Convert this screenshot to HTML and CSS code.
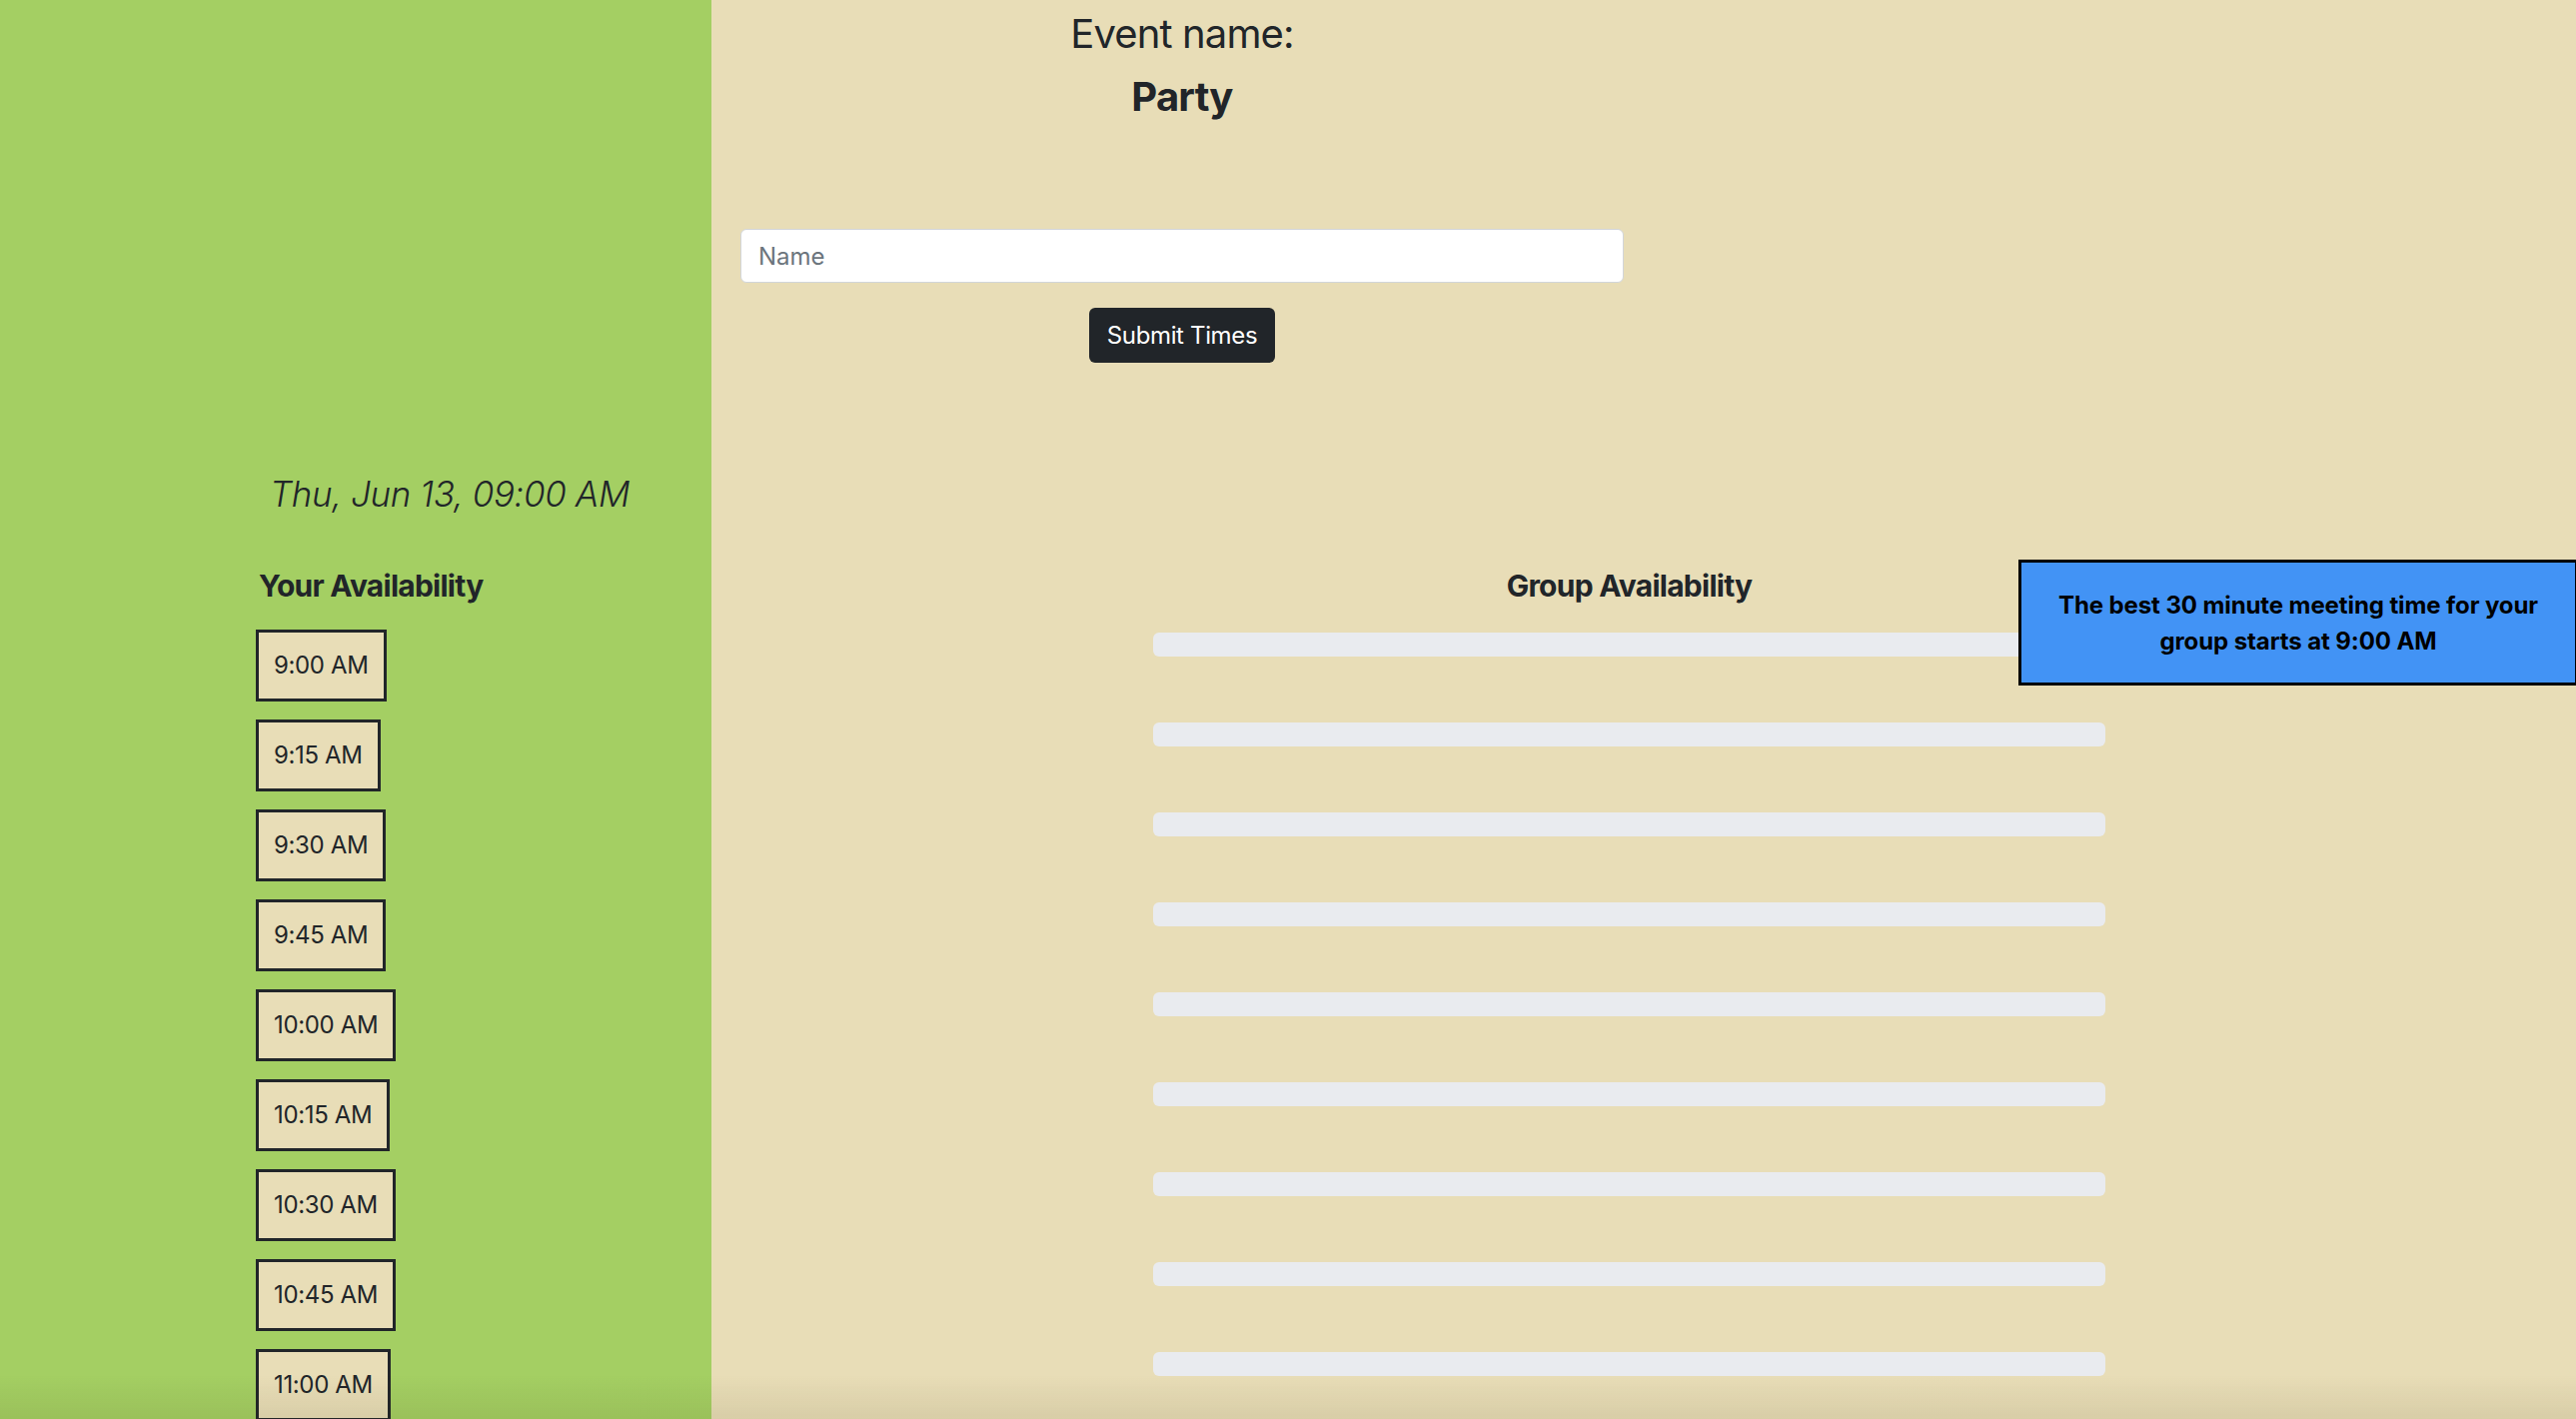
FILE: index.html
```html
<!DOCTYPE html>
<html lang="en">
<head>
<meta charset="utf-8">
<title>Party</title>
<link rel="stylesheet" href="styles.css">
</head>
<body>
<div class="page">
  <section class="top">
    <div class="event-col">
      <h3 class="event-label">Event name:</h3>
      <h3 class="event-name">Party</h3>
      <form class="name-form">
        <input class="name-input" type="text" placeholder="Name">
        <button class="submit-btn" type="button">Submit Times</button>
      </form>
    </div>
  </section>

  <section class="lower">
    <p class="date">Thu, Jun 13, 09:00 AM</p>
    <div class="avail-row">
      <div class="your-col">
        <h5 class="section-title">Your Availability</h5>
        <div class="slots">
          <button class="slot" type="button">9:00 AM</button>
          <button class="slot" type="button">9:15 AM</button>
          <button class="slot" type="button">9:30 AM</button>
          <button class="slot" type="button">9:45 AM</button>
          <button class="slot" type="button">10:00 AM</button>
          <button class="slot" type="button">10:15 AM</button>
          <button class="slot" type="button">10:30 AM</button>
          <button class="slot" type="button">10:45 AM</button>
          <button class="slot" type="button">11:00 AM</button>
        </div>
      </div>
      <div class="group-col">
        <h5 class="section-title group-title">Group Availability</h5>
        <div class="bars">
          <div class="bar"></div>
          <div class="bar"></div>
          <div class="bar"></div>
          <div class="bar"></div>
          <div class="bar"></div>
          <div class="bar"></div>
          <div class="bar"></div>
          <div class="bar"></div>
          <div class="bar"></div>
        </div>
      </div>
      <div class="best-time">The best 30 minute meeting time for your<br>group starts at 9:00 AM</div>
    </div>
  </section>
</div>
<div class="bottom-shade"></div>
</body>
</html>
```

FILE: styles.css
```css
html, body {
  margin: 0;
  padding: 0;
}

body {
  font-family: Inter, "Noto Sans", "Liberation Sans", sans-serif;
  color: #212529;
  font-size: 24px;
  line-height: 1.5;
  overflow: hidden;
  background: #e8ddb7;
}

.page {
  min-height: 1420px;
  background: linear-gradient(90deg, #a4cf63 0, #a4cf63 712px, #e8ddb7 712px);
}

.top {
  padding-left: 712px;
  padding-top: 10px;
}

.event-col {
  width: 940px;
  box-sizing: border-box;
  padding: 0 27px 0 29px;
  text-align: center;
}

.event-label {
  margin: 0 0 15px;
  font-size: 40px;
  line-height: 48px;
  font-weight: 400;
  letter-spacing: -0.022em;
}

.event-name {
  margin: 0;
  font-size: 40px;
  line-height: 48px;
  font-weight: 700;
  letter-spacing: -0.02em;
}

.name-form {
  display: flex;
  flex-direction: column;
  align-items: center;
  padding-top: 108px;
}

.name-input {
  display: block;
  width: 100%;
  height: 54px;
  box-sizing: border-box;
  border: 1.5px solid #d2d5d9;
  border-radius: 6px;
  background: #fff;
  padding: 0 17px;
  font-family: inherit;
  font-size: 24px;
  color: #212529;
}

.name-input::placeholder {
  color: #6c757d;
}

.submit-btn {
  margin-top: 25px;
  height: 55px;
  padding: 0 18px;
  border: none;
  border-radius: 6px;
  background: #212529;
  color: #fff;
  font-family: inherit;
  font-size: 24px;
  letter-spacing: -0.015em;
}

.lower {
  padding-left: 256px;
  padding-top: 110px;
}

.date {
  margin: 0 0 53px 14px;
  font-size: 35px;
  line-height: 42px;
  font-weight: 300;
  font-style: italic;
  letter-spacing: -0.012em;
}

.avail-row {
  position: relative;
  display: flex;
  align-items: flex-start;
}

.your-col {
  width: 898px;
}

.section-title {
  margin: 0 0 26px;
  font-size: 30px;
  line-height: 36px;
  font-weight: 700;
  letter-spacing: -0.025em;
  padding-left: 3px;
}

.slots {
  display: flex;
  flex-direction: column;
  align-items: flex-start;
  gap: 18px;
}

.slot {
  height: 72px;
  padding: 0 15px;
  border: 3px solid #212529;
  border-radius: 0;
  background: #e8ddb7;
  color: #212529;
  font-family: inherit;
  font-size: 24px;
  line-height: 36px;
  letter-spacing: -0.015em;
}

.group-col {
  width: 953px;
}

.group-title {
  text-align: center;
  padding-left: 0;
  margin-bottom: 29px;
}

.bars {
  display: flex;
  flex-direction: column;
  gap: 66px;
}

.bar {
  height: 24px;
  border-radius: 6px;
  background: #e9ebef;
}

.best-time {
  position: absolute;
  left: 1764px;
  top: -8px;
  width: 560px;
  box-sizing: border-box;
  padding: 25px 10px 23px;
  border: 3px solid #000;
  background: #4293f5;
  color: #000;
  font-weight: 700;
  font-size: 24px;
  line-height: 36px;
  text-align: center;
  letter-spacing: -0.004em;
}

.bottom-shade {
  position: fixed;
  left: 0;
  right: 0;
  bottom: 0;
  height: 44px;
  background: linear-gradient(180deg, rgba(60, 50, 10, 0) 0%, rgba(60, 50, 10, 0.09) 100%);
  pointer-events: none;
}
```
